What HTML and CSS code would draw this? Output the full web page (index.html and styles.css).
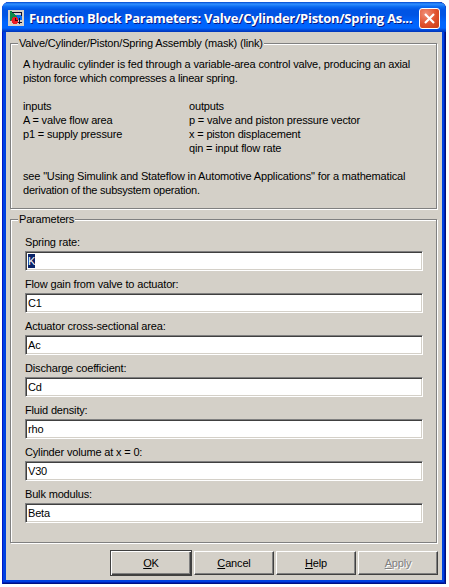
FILE: index.html
```
<!DOCTYPE html>
<html lang="en">
<head>
<meta charset="utf-8">
<title>Function Block Parameters</title>
<link rel="stylesheet" href="styles.css">
</head>
<body>
<main class="window">
  <header class="titlebar">
    <svg class="app-icon" width="16" height="16" viewBox="0 0 16 16" shape-rendering="crispEdges">
      <path fill="#d4d0c8" d="M0 0h16v16H0z"/>
      <path fill="#0868f0" d="M7 5h7v5H7z"/>
      <path fill="#108848" d="M2 1h1l6 5v2l-7 3z"/>
      <path fill="none" stroke="#101030" d="M4 2.500h9.500v3M11.500 8v6M10 12.500h4"/>
      <circle cx="7" cy="10.500" r="3.500" fill="#ee1c24"/>
      <path fill="none" stroke="#500000" d="M7.500 8v2.500H10"/>
    </svg>
    <h1 class="title">Function Block Parameters: Valve/Cylinder/Piston/Spring As...</h1>
    <button class="close" aria-label="Close"><svg width="19" height="19" viewBox="0 0 19 19"><path d="M5 5l9 9M14 5l-9 9" stroke="#fff" stroke-width="2.200"/></svg></button>
  </header>
  <div class="content">
    <section class="group about">
      <h2 class="legend">Valve/Cylinder/Piston/Spring Assembly (mask) (link)</h2>
      <p>A hydraulic cylinder is fed through a variable-area control valve, producing an axial</p>
      <p class="tight">piston force which compresses a linear spring.</p>
      <div class="io">
        <div><p>inputs</p><p>A = valve flow area</p><p>p1 = supply pressure</p></div>
        <div><p>outputs</p><p>p = valve and piston pressure vector</p><p>x = piston displacement</p><p>qin = input flow rate</p></div>
      </div>
      <p>see "Using Simulink and Stateflow in Automotive Applications" for a mathematical</p>
      <p class="tight">derivation of the subsystem operation.</p>
    </section>
    <section class="group params">
      <h2 class="legend">Parameters</h2>
      <div class="row"><p>Spring rate:</p><div class="field"><span class="selected">K</span></div></div>
      <div class="row"><p>Flow gain from valve to actuator:</p><div class="field">C1</div></div>
      <div class="row"><p>Actuator cross-sectional area:</p><div class="field">Ac</div></div>
      <div class="row"><p>Discharge coefficient:</p><div class="field">Cd</div></div>
      <div class="row"><p>Fluid density:</p><div class="field">rho</div></div>
      <div class="row"><p>Cylinder volume at x = 0:</p><div class="field">V30</div></div>
      <div class="row"><p>Bulk modulus:</p><div class="field">Beta</div></div>
    </section>
    <footer class="buttons">
      <button class="btn default"><span><u>O</u>K</span></button>
      <button class="btn"><span><u>C</u>ancel</span></button>
      <button class="btn"><span><u>H</u>elp</span></button>
      <button class="btn disabled"><span><u>A</u>pply</span></button>
    </footer>
  </div>
</main>
</body>
</html>
```
FILE: styles.css
```
* { box-sizing: border-box; }
body { margin: 0; background: #fff; font: 11px/14px "Liberation Sans", sans-serif; letter-spacing: -0.165px; color: #000; }
p, h1, h2 { margin: 0; font-weight: normal; font-size: inherit; white-space: nowrap; }
.tight { letter-spacing: -0.24px; }
.window {
  width: 444px; height: 582px; margin: 2px; padding: 0 4px 4px;
  border-radius: 7px 7px 0 0; overflow: hidden;
  background: #0040e0;
  box-shadow: inset 1px 0 #0018c8, inset -1px 0 #001078, inset -2px 0 #0020b0, inset 0 -1px #001080, inset 0 -2px #0020b8;
}
.titlebar {
  height: 30px; margin: 0 -4px; padding: 2px 6px 0 6px; display: flex; align-items: center;
  background: linear-gradient(#0048d0 0, #3090ff 2px, #0868f0 5px, #0054e4 8px, #0054e4 13px, #0064fc 20px, #0066ff 26px, #0048d8 28px, #0034b8 30px);
}
.app-icon { flex: none; }
.title {
  flex: 1; margin-left: 5px; font: bold 13px/20px "Open Sans", sans-serif; color: #fff;
  letter-spacing: -0.27px; text-shadow: 1px 1px #0a1883;
}
.close {
  flex: none; width: 21px; height: 21px; padding: 0; border: 1px solid #fff; border-radius: 3px;
  background: radial-gradient(circle at 30% 25%, #f09078, #e0502c 55%, #c83c14);
}
.close svg { display: block; }
.content { height: 548px; padding: 11px 4px 0; background: #d4d0c8; }
.group {
  position: relative; width: 427px; border: 1px solid #808080;
  box-shadow: 1px 1px #fff, inset 1px 1px #fff;
}
.legend { position: absolute; top: -8px; left: 7px; padding: 0 1px; background: #d4d0c8; }
.about { height: 166px; padding: 13px 12px 0; }
.io { display: grid; grid-template-columns: 166px 1fr; margin: 14px 0; }
.params { height: 324px; margin-top: 10px; padding: 15px 14px 0; }
.row { height: 42px; }
.field {
  width: 398px; height: 20px; margin-top: 2px; padding: 1px 2px 0;
  background: #fff; border: 1px solid; border-color: #808080 #fff #fff #808080;
  box-shadow: inset 1px 1px #404040, inset -1px -1px #d4d0c8; line-height: 17px;
}
.selected { display: inline-block; height: 14px; line-height: 14px; background: #0a246a; color: #fff; }
.buttons { display: flex; align-items: center; justify-content: flex-end; gap: 2px; height: 26px; margin-top: 7px; }
.btn {
  width: 80px; height: 24px; padding: 0; font: inherit; letter-spacing: inherit; color: #000; background: #d4d0c8;
  border: 1px solid; border-color: #fff #404040 #404040 #fff; box-shadow: inset -1px -1px #808080;
}
.default { width: 82px; height: 26px; border-color: #404040; box-shadow: inset 1px 1px #fff, inset -1px -1px #404040, inset -2px -2px #808080; }
.disabled { color: #808080; text-shadow: 1px 1px #fff; }
```
